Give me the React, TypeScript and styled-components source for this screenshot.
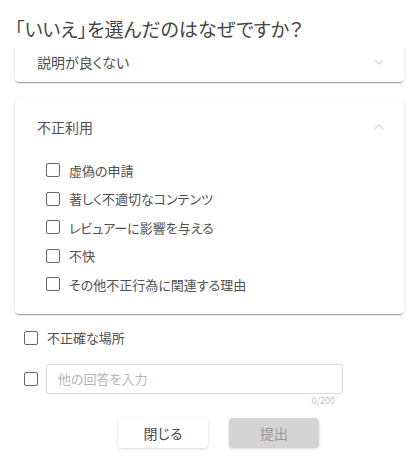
import React, { useLayoutEffect, useRef } from "react";
import styled, { createGlobalStyle } from "styled-components";

const Global = createGlobalStyle`
  html, body { margin: 0; padding: 0; background: #fff; }
  body {
    font-family: "Noto Sans CJK JP", "Noto Sans", sans-serif;
    font-feature-settings: "palt";
    color: #4a4a4a;
  }
  * { box-sizing: border-box; }
`;

const Dialog = styled.div`
  width: 420px;
  height: 468px;
  display: flex;
  flex-direction: column;
  background: #fff;
  overflow: hidden;
`;

const Title = styled.h1`
  margin: 0;
  height: 48px;
  flex: none;
  padding: 14px 15px 0;
  font-size: 19px;
  font-weight: 400;
  line-height: 30px;
  color: #464646;
  background: #fff;
  position: relative;
  z-index: 1;
`;

const ScrollArea = styled.div`
  height: 360px;
  flex: none;
  overflow-y: auto;
  scrollbar-width: none;
  &::-webkit-scrollbar { display: none; }
  padding: 4px 16px 20px 15px;
`;

const Card = styled.section<{ $gapTop?: boolean }>`
  background: #fff;
  border-radius: 4px;
  margin-top: ${(p) => (p.$gapTop ? "16px" : "0")};
  box-shadow: 0 2px 1px -1px rgba(0, 0, 0, 0.2), 0 1px 1px 0 rgba(0, 0, 0, 0.14),
    0 1px 3px 0 rgba(0, 0, 0, 0.12);
`;

const CardHeader = styled.div<{ $open?: boolean }>`
  height: ${(p) => (p.$open ? "56px" : "40px")};
  display: flex;
  align-items: center;
  justify-content: space-between;
  padding: ${(p) => (p.$open ? "2px 20px 0 22px" : "0 20px 0 22px")};
  font-size: 14px;
  color: #505050;
`;

const CardBody = styled.div`
  padding: 2px 0 15px 31px;
  display: flex;
  flex-direction: column;
`;

const Row = styled.label<{ $h?: number }>`
  height: ${(p) => p.$h ?? 28.5}px;
  display: flex;
  align-items: center;
  gap: 9px;
  font-size: 13px;
  color: #505050;
`;

const Box = styled.span`
  width: 14px;
  height: 14px;
  flex: none;
  border: 1px solid #666;
  border-radius: 2px;
  background: #fff;
`;

const Outside = styled.div`
  padding: 10px 0 0 9px;
  display: flex;
  flex-direction: column;
`;

const OtherRow = styled.div`
  margin-top: 12px;
  display: flex;
  align-items: center;
  gap: 8px;
`;

const Input = styled.input`
  width: 297px;
  height: 30px;
  border: 1px solid #ddd;
  border-radius: 3px;
  padding: 0 11px;
  font-family: inherit;
  font-feature-settings: "palt";
  font-size: 13px;
  color: #444;
  outline: none;
  &::placeholder { color: #b5b5b5; }
`;

const Counter = styled.div`
  width: 311px;
  text-align: right;
  margin-top: 2px;
  padding-left: 9px;
  font-size: 9px;
  line-height: 10px;
  color: #c4c4c4;
`;

const Footer = styled.div`
  flex: none;
  display: flex;
  justify-content: center;
  gap: 21px;
  padding: 10px 0 0 17px;
`;

const Button = styled.button<{ $disabled?: boolean }>`
  width: 90px;
  height: 30px;
  border: none;
  border-radius: 4px;
  font-family: inherit;
  font-feature-settings: "palt";
  font-size: 14px;
  color: ${(p) => (p.$disabled ? "#9a9a9a" : "#4a4a4a")};
  background: ${(p) => (p.$disabled ? "#d4d4d4" : "#fff")};
  box-shadow: 0 1px 3px rgba(0, 0, 0, 0.14), 0 0 2px rgba(0, 0, 0, 0.06);
`;

const Chevron = ({ up }: { up?: boolean }) => (
  <svg width="10" height="6" viewBox="0 0 10 6" fill="none">
    <polyline
      points={up ? "1,5 5,1 9,5" : "1,1 5,5 9,1"}
      stroke="#d6d6d6"
      strokeWidth="1.3"
    />
  </svg>
);

const items = [
  "虚偽の申請",
  "著しく不適切なコンテンツ",
  "レビュアーに影響を与える",
  "不快",
  "その他不正行為に関連する理由",
];

export default function App() {
  const ref = useRef<HTMLDivElement>(null);
  useLayoutEffect(() => {
    if (ref.current) ref.current.scrollTop = 10;
  }, []);
  return (
    <Dialog>
      <Global />
      <Title>「いいえ」を選んだのはなぜですか？</Title>
      <ScrollArea ref={ref}>
        <Card>
          <CardHeader>
            <span>説明が良くない</span>
            <Chevron />
          </CardHeader>
        </Card>
        <Card $gapTop>
          <CardHeader $open>
            <span>不正利用</span>
            <Chevron up />
          </CardHeader>
          <CardBody>
            {items.map((t) => (
              <Row key={t}>
                <Box />
                {t}
              </Row>
            ))}
          </CardBody>
        </Card>
        <Outside>
          <Row $h={28}>
            <Box />
            不正確な場所
          </Row>
          <OtherRow>
            <Box />
            <Input placeholder="他の回答を入力" />
          </OtherRow>
          <Counter>0/200</Counter>
        </Outside>
      </ScrollArea>
      <Footer>
        <Button>閉じる</Button>
        <Button $disabled>提出</Button>
      </Footer>
    </Dialog>
  );
}
